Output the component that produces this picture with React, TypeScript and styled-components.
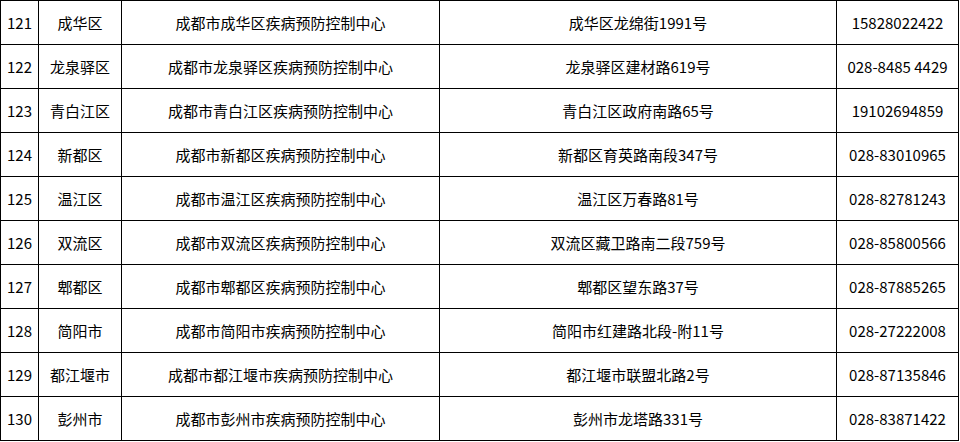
import React from 'react';
import styled, { createGlobalStyle } from 'styled-components';

const GlobalStyle = createGlobalStyle`
  html, body {
    margin: 0;
    padding: 0;
    background: #ffffff;
  }
`;

const StyledTable = styled.table`
  width: 959px;
  table-layout: fixed;
  border-collapse: collapse;
  font-family: "Noto Sans CJK SC", "Liberation Sans", sans-serif;
  font-size: 15px;
  color: #000000;
`;

const Td = styled.td`
  height: 43px;
  padding: 0;
  border: 1px solid #000000;
  text-align: center;
  vertical-align: middle;
  white-space: nowrap;
  overflow: hidden;
`;

type Row = [string, string, string, string, string];

const rows: Row[] = [
  ['121', '成华区', '成都市成华区疾病预防控制中心', '成华区龙绵街1991号', '15828022422'],
  ['122', '龙泉驿区', '成都市龙泉驿区疾病预防控制中心', '龙泉驿区建材路619号', '028-8485 4429'],
  ['123', '青白江区', '成都市青白江区疾病预防控制中心', '青白江区政府南路65号', '19102694859'],
  ['124', '新都区', '成都市新都区疾病预防控制中心', '新都区育英路南段347号', '028-83010965'],
  ['125', '温江区', '成都市温江区疾病预防控制中心', '温江区万春路81号', '028-82781243'],
  ['126', '双流区', '成都市双流区疾病预防控制中心', '双流区藏卫路南二段759号', '028-85800566'],
  ['127', '郫都区', '成都市郫都区疾病预防控制中心', '郫都区望东路37号', '028-87885265'],
  ['128', '简阳市', '成都市简阳市疾病预防控制中心', '简阳市红建路北段-附11号', '028-27222008'],
  ['129', '都江堰市', '成都市都江堰市疾病预防控制中心', '都江堰市联盟北路2号', '028-87135846'],
  ['130', '彭州市', '成都市彭州市疾病预防控制中心', '彭州市龙塔路331号', '028-83871422'],
];

const widths = [38, 83, 318, 397, 122];

export default function App() {
  return (
    <>
      <GlobalStyle />
      <StyledTable>
        <colgroup>
          {widths.map((w, i) => (
            <col key={i} style={{ width: w }} />
          ))}
        </colgroup>
        <tbody>
          {rows.map((row) => (
            <tr key={row[0]}>
              {row.map((cell, j) => (
                <Td key={j}>{cell}</Td>
              ))}
            </tr>
          ))}
        </tbody>
      </StyledTable>
    </>
  );
}
